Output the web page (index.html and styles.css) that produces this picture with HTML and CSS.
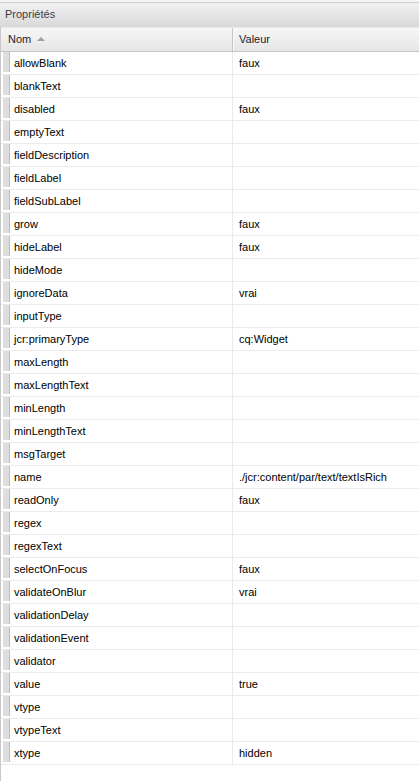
FILE: index.html
```html
<!DOCTYPE html>
<html lang="fr">
<head>
<meta charset="utf-8">
<title>Propriétés</title>
<link rel="stylesheet" href="styles.css">
</head>
<body>
<div class="panel">
  <div class="title-bar">Propriétés</div>
  <div class="grid">
    <div class="head">
      <div class="hcell hname">Nom <span class="sort"></span></div>
      <div class="hcell hval">Valeur</div>
    </div>
    <div class="rows">
      <div class="row"><div class="name"><span class="handle"></span>allowBlank</div><div class="val">faux</div></div>
      <div class="row"><div class="name"><span class="handle"></span>blankText</div><div class="val"></div></div>
      <div class="row"><div class="name"><span class="handle"></span>disabled</div><div class="val">faux</div></div>
      <div class="row"><div class="name"><span class="handle"></span>emptyText</div><div class="val"></div></div>
      <div class="row"><div class="name"><span class="handle"></span>fieldDescription</div><div class="val"></div></div>
      <div class="row"><div class="name"><span class="handle"></span>fieldLabel</div><div class="val"></div></div>
      <div class="row"><div class="name"><span class="handle"></span>fieldSubLabel</div><div class="val"></div></div>
      <div class="row"><div class="name"><span class="handle"></span>grow</div><div class="val">faux</div></div>
      <div class="row"><div class="name"><span class="handle"></span>hideLabel</div><div class="val">faux</div></div>
      <div class="row"><div class="name"><span class="handle"></span>hideMode</div><div class="val"></div></div>
      <div class="row"><div class="name"><span class="handle"></span>ignoreData</div><div class="val">vrai</div></div>
      <div class="row"><div class="name"><span class="handle"></span>inputType</div><div class="val"></div></div>
      <div class="row"><div class="name"><span class="handle"></span>jcr:primaryType</div><div class="val">cq:Widget</div></div>
      <div class="row"><div class="name"><span class="handle"></span>maxLength</div><div class="val"></div></div>
      <div class="row"><div class="name"><span class="handle"></span>maxLengthText</div><div class="val"></div></div>
      <div class="row"><div class="name"><span class="handle"></span>minLength</div><div class="val"></div></div>
      <div class="row"><div class="name"><span class="handle"></span>minLengthText</div><div class="val"></div></div>
      <div class="row"><div class="name"><span class="handle"></span>msgTarget</div><div class="val"></div></div>
      <div class="row"><div class="name"><span class="handle"></span>name</div><div class="val">./jcr:content/par/text/textIsRich</div></div>
      <div class="row"><div class="name"><span class="handle"></span>readOnly</div><div class="val">faux</div></div>
      <div class="row"><div class="name"><span class="handle"></span>regex</div><div class="val"></div></div>
      <div class="row"><div class="name"><span class="handle"></span>regexText</div><div class="val"></div></div>
      <div class="row"><div class="name"><span class="handle"></span>selectOnFocus</div><div class="val">faux</div></div>
      <div class="row"><div class="name"><span class="handle"></span>validateOnBlur</div><div class="val">vrai</div></div>
      <div class="row"><div class="name"><span class="handle"></span>validationDelay</div><div class="val"></div></div>
      <div class="row"><div class="name"><span class="handle"></span>validationEvent</div><div class="val"></div></div>
      <div class="row"><div class="name"><span class="handle"></span>validator</div><div class="val"></div></div>
      <div class="row"><div class="name"><span class="handle"></span>value</div><div class="val">true</div></div>
      <div class="row"><div class="name"><span class="handle"></span>vtype</div><div class="val"></div></div>
      <div class="row"><div class="name"><span class="handle"></span>vtypeText</div><div class="val"></div></div>
      <div class="row"><div class="name"><span class="handle"></span>xtype</div><div class="val">hidden</div></div>
    </div>
  </div>
</div>
</body>
</html>
```
FILE: styles.css
```css
html, body {
  margin: 0;
  padding: 0;
  background: #ffffff;
}
body {
  font-family: "Liberation Sans", Arial, sans-serif;
  font-size: 11px;
  color: #000;
}
.panel {
  width: 419px;
  height: 781px;
  box-sizing: border-box;
  padding-top: 2px;
  background: #f4f4f4;
  display: flex;
  flex-direction: column;
}
.title-bar {
  height: 24px;
  line-height: 23px;
  border-top: 1px solid #cfcfcf;
  padding-left: 5px;
  color: #3c3c48;
  background: linear-gradient(#f1f1f1, #d9d9d9);
}
.grid {
  flex: 1;
  background: #fff;
  border-left: 1px solid #c8c8c8;
  display: flex;
  flex-direction: column;
}
.head {
  display: grid;
  grid-template-columns: 232px 1fr;
  height: 23px;
  border-top: 1px solid #e8e8e8;
  border-bottom: 1px solid #c3c3c3;
  background: linear-gradient(#f7f7f7, #e6e6e6);
}
.hcell {
  line-height: 23px;
  color: #1c1c2a;
}
.hname {
  padding-left: 7px;
  border-right: 1px solid #c4c4c4;
  box-shadow: 1px 0 0 #fbfbfb;
  display: flex;
  align-items: center;
  gap: 6px;
}
.sort {
  width: 0;
  height: 0;
  border-left: 4px solid transparent;
  border-right: 4px solid transparent;
  border-bottom: 4px solid #a0a0a0;
  margin-top: -1px;
}
.hval {
  padding-left: 6px;
}
.row {
  display: grid;
  grid-template-columns: 232px 1fr;
  height: 23px;
  box-sizing: border-box;
  border-bottom: 1px solid #ebebeb;
}
.name {
  display: flex;
  align-items: center;
  border-right: 1px solid #ebebeb;
}
.handle {
  width: 6px;
  height: 20px;
  margin: 0 4px 0 2px;
  background: #dedede;
  border-right: 1px solid #bdbdbd;
  align-self: flex-start;
}
.val {
  line-height: 22px;
  padding-left: 6px;
}
```
